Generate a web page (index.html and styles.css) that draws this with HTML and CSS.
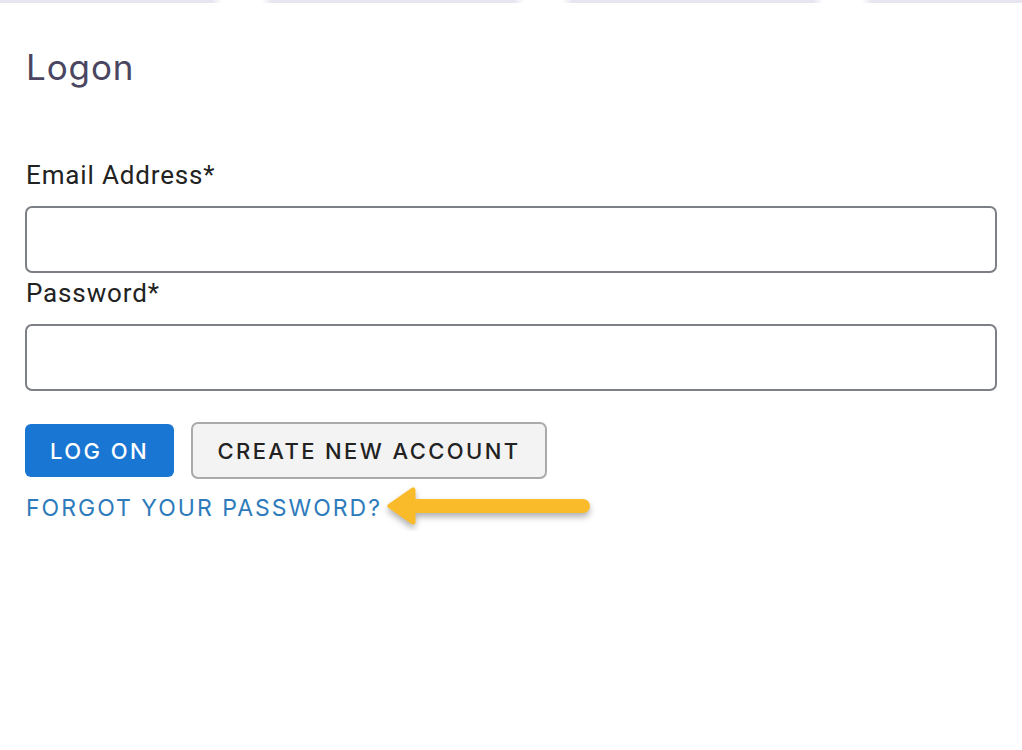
FILE: index.html
```html
<!DOCTYPE html>
<html lang="en">
<head>
    <meta charset="UTF-8">
    <meta name="viewport" content="width=device-width, initial-scale=1.0">
    <title>Logon</title>
    <link rel="stylesheet" href="styles.css">
</head>
<body>
    <div class="top-strip"></div>
    <div class="container">
        <h2 class="page-title">Logon</h2>
        <form id="logon-form">
            <div class="form-group">
                <label for="email">Email Address*</label>
                <input type="text" id="email" name="email">
            </div>
            <div class="form-group">
                <label for="password">Password*</label>
                <input type="password" id="password" name="password">
            </div>
            <div class="button-row">
                <button type="submit" class="btn btn-primary">Log On</button>
                <button type="button" class="btn btn-secondary">Create New Account</button>
            </div>
            <div class="forgot-row">
                <a href="#" class="forgot-link">Forgot your password?</a>
                <svg class="arrow" width="208" height="46" viewBox="0 0 208 46">
                    <path d="M6 21 L29 5 L29 37 Z" fill="#f9bb2a" stroke="#f9bb2a" stroke-width="5" stroke-linejoin="round"/>
                    <line x1="27" y1="21" x2="199" y2="21" stroke="#f9bb2a" stroke-width="14" stroke-linecap="round"/>
                </svg>
            </div>
        </form>
    </div>
</body>
</html>
```

FILE: styles.css
```css
body {
    margin: 0;
    background-color: #fff;
    font-family: Roboto, Arial, sans-serif;
}

.top-strip {
    height: 3px;
    background: linear-gradient(to right,
        #e7e5ef 0, #e7e5ef 212px, #fff 222px, #fff 262px, #e7e5ef 272px,
        #e7e5ef 514px, #fff 524px, #fff 562px, #e7e5ef 572px,
        #e7e5ef 813px, #fff 823px, #fff 862px, #e7e5ef 872px);
}

.container {
    padding: 0 25px;
}

.page-title {
    margin: 43px 0 69px 1px;
    font-family: Inter, sans-serif;
    font-size: 35px;
    font-weight: 400;
    line-height: 1.2;
    color: #4a4560;
    letter-spacing: 0.9px;
}

.form-group {
    margin-bottom: 2px;
}

label {
    display: block;
    margin-left: 1px;
    margin-bottom: 13px;
    font-size: 26px;
    line-height: 36px;
    letter-spacing: 0.85px;
    color: #222;
}

input[type="text"],
input[type="password"] {
    display: block;
    width: 100%;
    height: 67px;
    border: 2px solid #7c7f85;
    border-radius: 7px;
    box-sizing: border-box;
    font-size: 20px;
    padding: 0 14px;
}

.button-row {
    display: flex;
    align-items: center;
    gap: 17px;
    margin-top: 31px;
}

.btn {
    font-family: Inter, sans-serif;
    font-size: 22px;
    font-weight: 500;
    text-transform: uppercase;
    letter-spacing: 2.4px;
    cursor: pointer;
}

.btn-primary {
    width: 149px;
    height: 53px;
    background-color: #1976d2;
    color: #fff;
    border: none;
    border-radius: 6px;
}

.btn-secondary {
    width: 356px;
    height: 57px;
    background-color: #f3f3f3;
    color: #222;
    border: 2px solid #aaa;
    border-radius: 7px;
}

.forgot-row {
    display: flex;
    align-items: center;
    margin-top: 6px;
}

.forgot-link {
    margin-left: 1px;
    font-family: Inter, sans-serif;
    font-size: 23px;
    color: #2e7bbb;
    text-decoration: none;
    text-transform: uppercase;
    letter-spacing: 2px;
}

.arrow {
    margin-left: 2px;
    filter: drop-shadow(0 4px 3px rgba(0, 0, 0, 0.3));
}
```
